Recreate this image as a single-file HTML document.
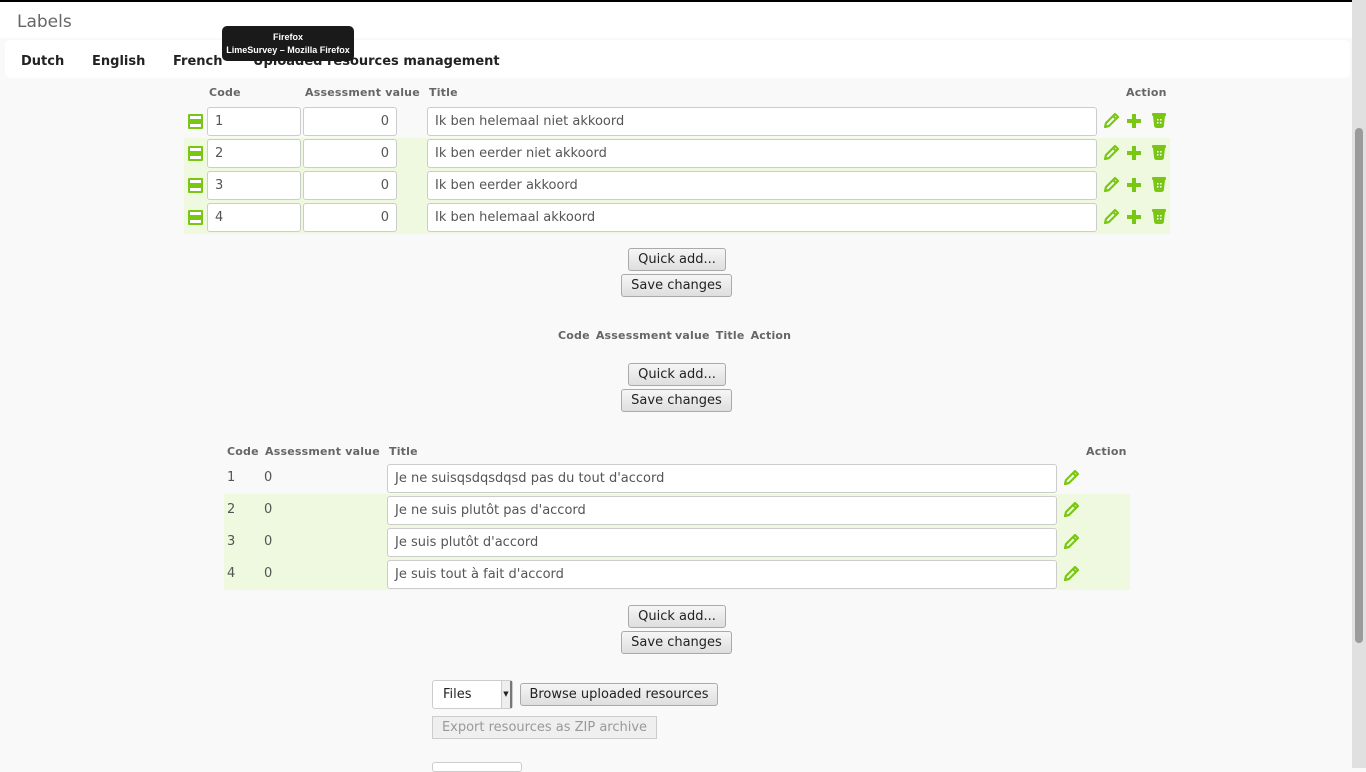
<!DOCTYPE html>
<html><head><meta charset="utf-8"><style>
*{margin:0;padding:0;box-sizing:border-box}
body{width:1366px;height:768px;overflow:hidden;background:#f9f9f9;font-family:"DejaVu Sans","Liberation Sans",sans-serif;font-size:13px;color:#555;position:relative}
.a{position:absolute}
.h{position:absolute;font-size:11px;font-weight:bold;color:#666;letter-spacing:.2px}
.in{position:absolute;height:29px;background:#fff;border:1px solid #ccc;border-radius:3px;padding:0 7px;line-height:27px;color:#555}
.bg{position:absolute;background:#eff9df}
.btn{position:absolute;height:23px;border:1px solid #aaa;border-radius:3px;background:linear-gradient(#f6f6f6,#dedede);line-height:21px;text-align:center;color:#222;font-size:13px}
svg{position:absolute}
</style></head><body>
<div class="a" style="left:0;top:0;width:1366px;height:2px;background:#000"></div>
<div class="a" style="left:0;top:2px;width:1366px;height:36px;background:#fff"></div>
<div class="a" style="left:17px;top:12px;font-size:17px;color:#666">Labels</div>
<div class="a" style="left:5px;top:40px;width:1345px;height:38px;background:#fff;border-radius:6px"></div>
<div class="a" style="left:21px;top:54px;font-weight:bold;color:#222">Dutch</div>
<div class="a" style="left:92px;top:54px;font-weight:bold;color:#222">English</div>
<div class="a" style="left:173px;top:54px;font-weight:bold;color:#222">French</div>
<div class="a" style="left:253px;top:54px;font-weight:bold;color:#222">Uploaded resources management</div>
<div class="a" style="left:222px;top:26px;width:132px;height:35px;background:#1a1a1a;border-radius:5px;color:#fff;font-family:'Liberation Sans',sans-serif;font-size:9px;font-weight:bold;text-align:center;line-height:13px;padding-top:5px;white-space:nowrap">Firefox<br>LimeSurvey – Mozilla Firefox</div>
<div class="a" style="left:1352px;top:0;width:14px;height:768px;background:#e0e0e0"></div>
<div class="a" style="left:1355px;top:128px;width:8px;height:515px;background:#9b9b9b;border-radius:4px"></div>

<div class="h" style="left:209px;top:86px">Code</div>
<div class="h" style="left:305px;top:86px">Assessment value</div>
<div class="h" style="left:429px;top:86px">Title</div>
<div class="h" style="left:1126px;top:86px">Action</div>
<div class="bg" style="left:184px;top:138px;width:986px;height:96px"></div>

<div class="btn" style="left:628px;top:248px;width:98px">Quick add...</div>
<div class="btn" style="left:621px;top:274px;width:111px">Save changes</div>
<div class="h" style="left:558px;top:329px;word-spacing:-1px">Code &nbsp;Assessment value &nbsp;Title &nbsp;Action</div>
<div class="btn" style="left:628px;top:363px;width:98px">Quick add...</div>
<div class="btn" style="left:621px;top:389px;width:111px">Save changes</div>

<div class="h" style="left:227px;top:445px">Code</div>
<div class="h" style="left:265px;top:445px">Assessment value</div>
<div class="h" style="left:389px;top:445px">Title</div>
<div class="h" style="left:1086px;top:445px">Action</div>
<div class="bg" style="left:224px;top:494px;width:906px;height:96px"></div>

<div class="btn" style="left:628px;top:605px;width:98px">Quick add...</div>
<div class="btn" style="left:621px;top:631px;width:111px">Save changes</div>

<div class="a" style="left:432px;top:680px;width:81px;height:29px;background:#fff;border:1px solid #ccc;border-radius:3px;padding-left:10px;line-height:27px;color:#222">Files</div>
<div class="a" style="left:501px;top:681px;width:11px;height:27px;background:#eee;border-left:1px solid #ccc;border-right:2px solid #777;font-size:7px;text-align:center;line-height:27px;color:#222">▼</div>
<div class="btn" style="left:520px;top:683px;width:198px">Browse uploaded resources</div>
<div class="a" style="left:432px;top:716px;width:225px;height:23px;border:1px solid #ccc;background:#efefef;color:#999;text-align:center;line-height:21px">Export resources as ZIP archive</div>
<div class="a" style="left:432px;top:762px;width:90px;height:10px;border:1px solid #ccc;border-radius:3px;background:#fff"></div>

<div id="t1"></div>
<script>
var G='#7ac615';
function pencil(x,y){return '<svg style="left:'+x+'px;top:'+y+'px" width="18" height="18" viewBox="0 0 18 18"><path d="M3 15 L4 11 L13 2 L16 5 L7 14 Z M11 4 L14 7" fill="none" stroke="'+G+'" stroke-width="2.2" stroke-linejoin="round"/></svg>';}
function plus(x,y){return '<svg style="left:'+x+'px;top:'+y+'px" width="16" height="16"><path d="M8 1V15M1 8H15" stroke="'+G+'" stroke-width="4"/></svg>';}
function trash(x,y){return '<svg style="left:'+x+'px;top:'+y+'px" width="16" height="17"><rect x="1" y="1" width="14" height="3" rx="1" fill="'+G+'"/><path d="M2 4H14L13 13Q13 16 10 16H6Q3 16 3 13Z" fill="'+G+'"/><g fill="#fff"><rect x="6" y="7" width="1.5" height="1.5"/><rect x="9" y="7" width="1.5" height="1.5"/><rect x="6" y="10" width="1.5" height="1.5"/><rect x="9" y="10" width="1.5" height="1.5"/></g></svg>';}
function handle(x,y){return '<svg style="left:'+x+'px;top:'+y+'px" width="15" height="15"><rect x="0" y="0" width="15" height="15" rx="1" fill="'+G+'"/><rect x="2" y="2" width="11" height="3" fill="#fff"/><rect x="2" y="10" width="11" height="3" fill="#fff"/></svg>';}
var t1=['Ik ben helemaal niet akkoord','Ik ben eerder niet akkoord','Ik ben eerder akkoord','Ik ben helemaal akkoord'];
var t2=["Je ne suisqsdqsdqsd pas du tout d'accord","Je ne suis plutôt pas d'accord","Je suis plutôt d'accord","Je suis tout à fait d'accord"];
var h='';
for(var i=0;i<4;i++){var c=121+32*i;
h+=handle(188,c-7);
h+='<div class="in" style="left:207px;top:'+(c-14)+'px;width:94px">'+(i+1)+'</div>';
h+='<div class="in" style="left:303px;top:'+(c-14)+'px;width:94px;text-align:right">0</div>';
h+='<div class="in" style="left:427px;top:'+(c-14)+'px;width:670px">'+t1[i]+'</div>';
h+=pencil(1102,c-9)+plus(1126,c-8)+trash(1151,c-9);
var d=478+32*i;
h+='<div class="a" style="left:227px;top:'+(d-8)+'px">'+(i+1)+'</div>';
h+='<div class="a" style="left:264px;top:'+(d-8)+'px">0</div>';
h+='<div class="in" style="left:387px;top:'+(d-14)+'px;width:670px">'+t2[i]+'</div>';
h+=pencil(1062,d-9);
}
document.getElementById('t1').outerHTML=h;
</script>
</body></html>
